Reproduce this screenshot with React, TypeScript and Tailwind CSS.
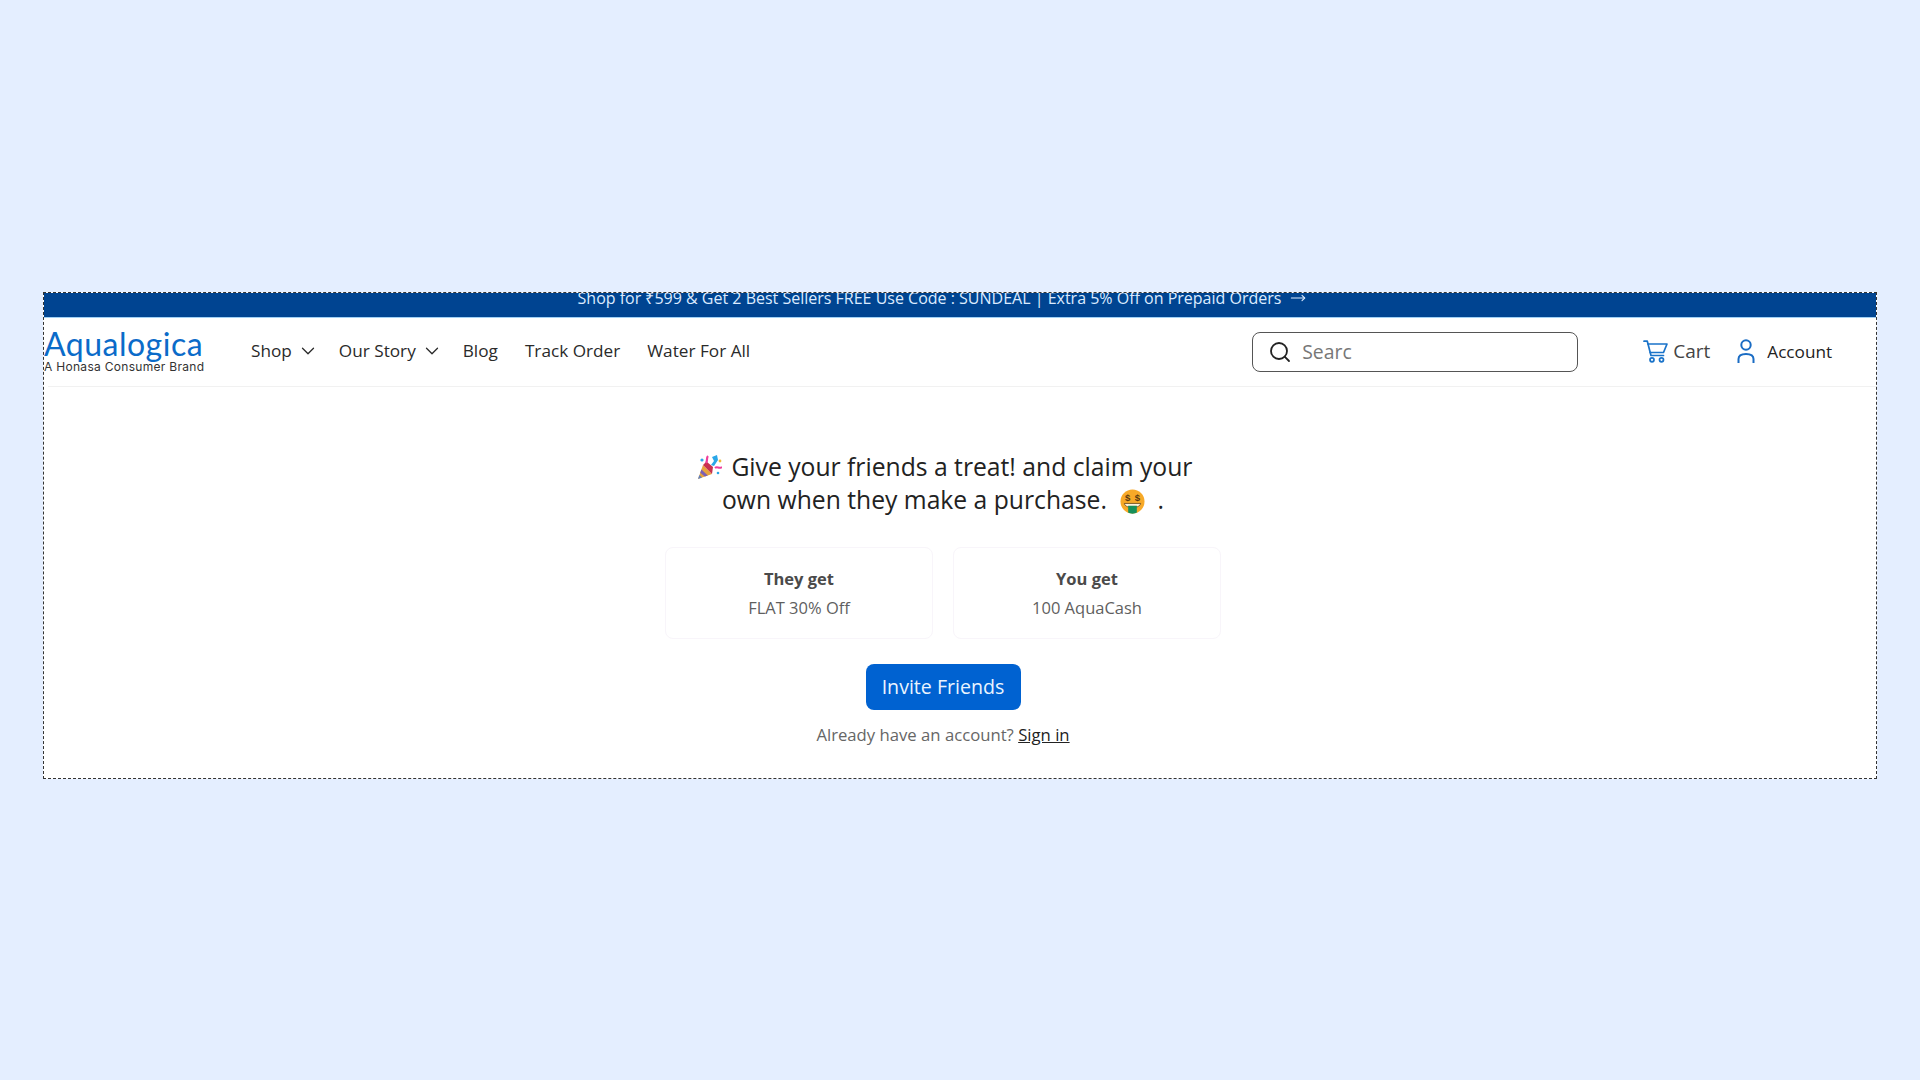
import { ChevronDown, Search, MoveRight } from "lucide-react";

function Popper() {
  return (
    <svg viewBox="0 0 25 25" className="inline-block w-[25px] h-[25px] align-[-4px] translate-x-[3px]">
      <path d="M1 24 L6 10 L15 19 Z" fill="#e8a33d" />
      <path d="M4.4 14.5 L10.8 20.5 L7.8 21.5 L3.2 17.8 Z" fill="#7b5fb5" />
      <path d="M2.4 20 L5 22.4 L1 24 Z" fill="#5d7fc0" />
      <path d="M6 10 L9.5 6.5 L16 12 L15 19 Z" fill="#c8324f" />
      <path d="M14 10 L17 6 L15 2 L20 0 L21 5 L17 11 Z" fill="#2aa7e8" />
      <path d="M9 8 C11 5 9 3 11 1" stroke="#ee3f9c" strokeWidth="2.2" fill="none" />
      <path d="M18 13 C20 11 22 14 25 12" stroke="#ee3f9c" strokeWidth="2" fill="none" />
      <circle cx="5" cy="5" r="1.6" fill="#2aa7e8" />
      <circle cx="23" cy="6" r="1.4" fill="#f0b93a" />
      <circle cx="21" cy="18" r="1.3" fill="#2aa7e8" />
    </svg>
  );
}

function MoneyMouth() {
  return (
    <svg viewBox="0 0 26 26" className="inline-block w-[25px] h-[25px] align-[-5px]">
      <circle cx="13" cy="13" r="12.5" fill="#f7a928" />
      <text x="8" y="12" fontSize="10" fontWeight="700" textAnchor="middle" fill="#5a3a10" fontFamily="Liberation Sans, sans-serif">$</text>
      <text x="18" y="12" fontSize="10" fontWeight="700" textAnchor="middle" fill="#5a3a10" fontFamily="Liberation Sans, sans-serif">$</text>
      <path d="M4.5 15 H21.5 C21 17 19.5 18 18 18.5 H8 C6.5 18 5 17 4.5 15 Z" fill="#fff3dc" stroke="#5a3a10" strokeWidth="0.8" />
      <path d="M8.5 17.5 H17.5 V24.5 C15.5 26 10.5 26 8.5 24.5 Z" fill="#17905a" />
    </svg>
  );
}

function CartIcon() {
  return (
    <svg viewBox="0 0 25 23" className="w-[25px] h-[23px]" fill="none" stroke="#1a73c9" strokeWidth="1.7" strokeLinejoin="round" strokeLinecap="round">
      <path d="M1 1.2 H4.3 L8 15.5 H20.5" />
      <path d="M5 4 H24 L20.5 12.5 H7.2" />
      <circle cx="9" cy="19.8" r="2" />
      <circle cx="18.5" cy="19.8" r="2" />
    </svg>
  );
}

function UserIcon() {
  return (
    <svg viewBox="0 0 18 24" className="w-[18px] h-[24px]" fill="none" stroke="#1a6cc4" strokeWidth="2">
      <circle cx="9" cy="6" r="4.7" />
      <path d="M1.5 24 V20 C1.5 16.8 4 15 9 15 C14 15 16.5 16.8 16.5 20 V24" />
    </svg>
  );
}

function Card({ title, value }: { title: string; value: string }) {
  return (
    <div className="w-[268px] h-[92px] flex flex-col items-center pt-[19px] rounded-lg border border-[#f8f5fa] bg-white text-[#4a4a4a]">
      <div className="font-bold text-[16.5px] leading-[24px]">{title}</div>
      <div className="text-[16.5px] leading-[24px] mt-[5px] text-[#5f5f5f]">{value}</div>
    </div>
  );
}

export default function App() {
  return (
    <div className="min-h-screen bg-[#e4eeff] pt-[292px] px-[43px] font-['Open_Sans',sans-serif]">
      <div className="h-[487px] bg-white border border-dashed border-[#333] flex flex-col">
        <div className="h-[25px] shrink-0 bg-[#004491] border-b border-[#9fd0f5] text-[#dcebff] overflow-hidden flex justify-center pr-[36px]">
          <div className="flex items-start gap-[9px] text-[16px] leading-[10px] whitespace-nowrap">
            <span>Shop for ₹599 &amp; Get 2 Best Sellers FREE Use Code : SUNDEAL | Extra 5% Off on Prepaid Orders</span>
            <MoveRight size={16} strokeWidth={1.6} className="-mt-[3px]" />
          </div>
        </div>

        <div className="h-[70px] shrink-0 ml-[4px] border-b border-[#f1f1f1] flex items-center text-[#2a2a2a] -mt-px">
          <div className="w-[161px] -ml-[4px] shrink-0 flex flex-col">
            <div className="font-['Lato',sans-serif] text-[32px] leading-[30px] text-[#0b6bc9] tracking-[0.5px] whitespace-nowrap">Aqualogica</div>
            <div className="font-['Inter',sans-serif] text-[12px] leading-[14px] mt-[1px] text-[#333] tracking-[0.3px] whitespace-nowrap">A Honasa Consumer Brand</div>
          </div>

          <nav className="flex items-center ml-[46px] -mt-[1px] text-[17.2px] whitespace-nowrap">
            <span>Shop</span>
            <ChevronDown size={22} strokeWidth={1.4} className="ml-[5px]" />
            <span className="ml-[20px]">Our Story</span>
            <ChevronDown size={22} strokeWidth={1.4} className="ml-[5px]" />
            <span className="ml-[20px]">Blog</span>
            <span className="ml-[27px]">Track Order</span>
            <span className="ml-[27px]">Water For All</span>
          </nav>

          <div className="ml-[502px] w-[326px] h-[40px] rounded-lg border border-[#555] flex items-center pl-[15px] shrink-0">
            <Search size={24} strokeWidth={1.8} className="text-[#222]" />
            <span className="ml-[10px] text-[19.4px] text-[#777]">Searc</span>
          </div>

          <div className="ml-[65px] flex items-center">
            <CartIcon />
            <span className="ml-[5px] text-[19px] text-[#444]">Cart</span>
          </div>
          <div className="ml-[27px] flex items-center">
            <UserIcon />
            <span className="ml-[12px] text-[17.2px] text-[#222]">Account</span>
          </div>
        </div>

        <main className="flex flex-col items-center pr-[34px] pt-[63px]">
          <h1 className="max-w-[520px] text-center text-[24.7px] leading-[33px] text-[#222] font-normal">
            <Popper /> &nbsp;Give your friends a treat! and claim your own when they make a purchase. &nbsp;<MoneyMouth /> &nbsp;.
          </h1>
          <div className="flex gap-[20px] mt-[31px]">
            <Card title="They get" value="FLAT 30% Off" />
            <Card title="You get" value="100 AquaCash" />
          </div>
          <button className="mt-[25px] w-[155px] h-[46px] rounded-lg bg-[#0062d1] text-[#eaf4ff] text-[19.6px]">Invite Friends</button>
          <p className="mt-[13px] text-[16.7px] leading-[24px] text-[#666]">
            Already have an account? <a className="underline text-[#222]">Sign in</a>
          </p>
        </main>
      </div>
    </div>
  );
}
